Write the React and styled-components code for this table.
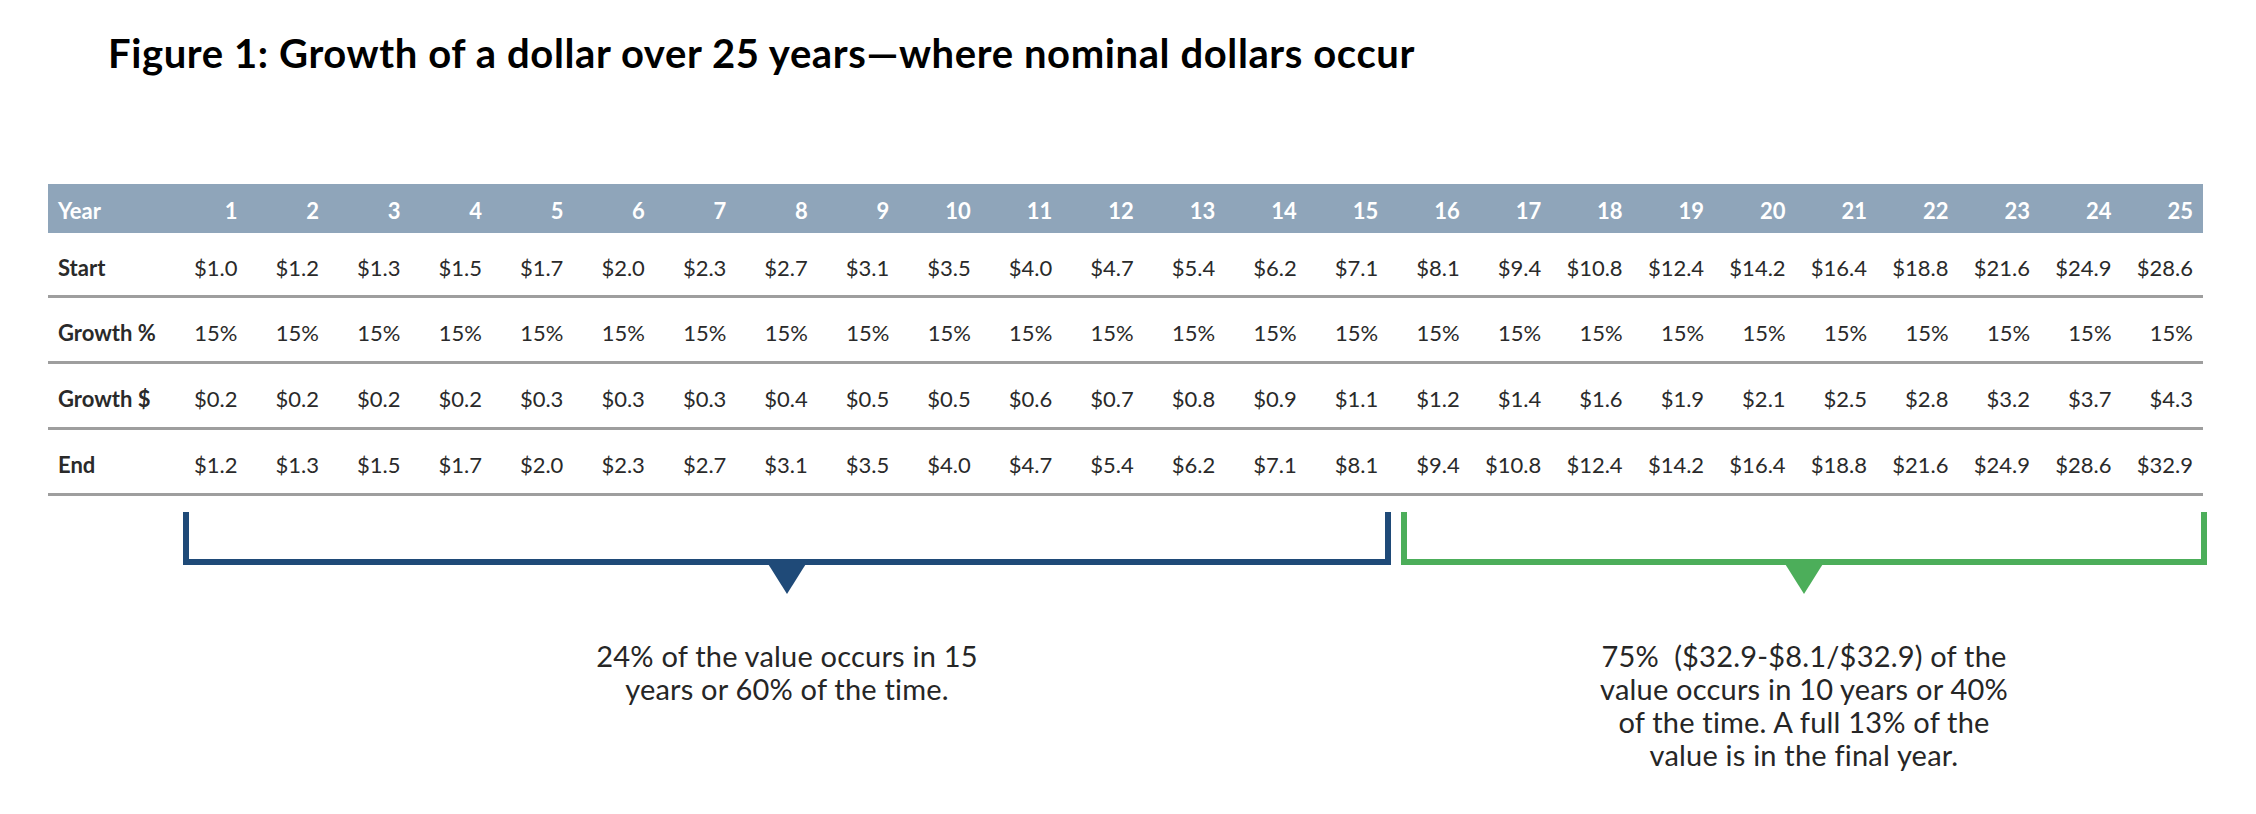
import React from "react";
import styled, { createGlobalStyle } from "styled-components";

const years = Array.from({ length: 25 }, (_, i) => i + 1);

const rows = [
  {
    label: "Start",
    values: [1.0, 1.2, 1.3, 1.5, 1.7, 2.0, 2.3, 2.7, 3.1, 3.5, 4.0, 4.7, 5.4, 6.2, 7.1, 8.1, 9.4, 10.8, 12.4, 14.2, 16.4, 18.8, 21.6, 24.9, 28.6],
  },
  { label: "Growth %", values: years.map(() => "15%") },
  {
    label: "Growth $",
    values: [0.2, 0.2, 0.2, 0.2, 0.3, 0.3, 0.3, 0.4, 0.5, 0.5, 0.6, 0.7, 0.8, 0.9, 1.1, 1.2, 1.4, 1.6, 1.9, 2.1, 2.5, 2.8, 3.2, 3.7, 4.3],
  },
  {
    label: "End",
    values: [1.2, 1.3, 1.5, 1.7, 2.0, 2.3, 2.7, 3.1, 3.5, 4.0, 4.7, 5.4, 6.2, 7.1, 8.1, 9.4, 10.8, 12.4, 14.2, 16.4, 18.8, 21.6, 24.9, 28.6, 32.9],
  },
];

const formatValue = (v) => (typeof v === "number" ? `$${v.toFixed(1)}` : v);

const App = () => {
  return (
    <>
      <GlobalStyle />
      <Page>
        <Title>Figure 1: Growth of a dollar over 25 years—where nominal dollars occur</Title>

        <Table>
          <Row $header>
            <LabelCell>Year</LabelCell>
            {years.map((y) => (
              <Cell key={y}>{y}</Cell>
            ))}
          </Row>
          {rows.map((row, i) => (
            <Row key={row.label} $first={i === 0}>
              <LabelCell>{row.label}</LabelCell>
              {row.values.map((v, j) => (
                <Cell key={j}>{formatValue(v)}</Cell>
              ))}
            </Row>
          ))}
        </Table>

        <Brackets>
          <Group $width={1208}>
            <Bracket $color="#1f4a78" />
            <Caption>
              24% of the value occurs in 15
              <br />
              years or 60% of the time.
            </Caption>
          </Group>
          <Group $width={806}>
            <Bracket $color="#4cae5a" />
            <Caption>
              75%{"\u00a0"} ($32.9-$8.1/$32.9) of the
              <br />
              value occurs in 10 years or 40%
              <br />
              of the time. A full 13% of the
              <br />
              value is in the final year.
            </Caption>
          </Group>
        </Brackets>
      </Page>
    </>
  );
};

export default App;

const GlobalStyle = createGlobalStyle`
  html, body {
    margin: 0;
    padding: 0;
    background: #ffffff;
  }
  body {
    font-family: Lato, "Open Sans", sans-serif;
    color: #222;
  }
`;

const Page = styled.div`
  width: 2256px;
  height: 814px;
  overflow: hidden;
  background: #ffffff;
`;

const Title = styled.h1`
  margin: 0;
  padding: 29px 0 0 108px;
  height: 48px;
  font-size: 40px;
  line-height: 48px;
  font-weight: 700;
  color: #000;
  letter-spacing: 0.6px;
  white-space: nowrap;
`;

const Table = styled.div`
  margin: 107px 0 0 48px;
  width: 2155px;
`;

const Row = styled.div`
  display: grid;
  grid-template-columns: 118px repeat(25, 1fr);
  align-items: center;
  height: ${(p) => (p.$header ? "49px" : p.$first ? "65px" : "66px")};
  box-sizing: border-box;
  padding-top: ${(p) => (p.$header ? "4px" : "6px")};
  background: ${(p) => (p.$header ? "#8fa5ba" : "transparent")};
  color: ${(p) => (p.$header ? "#ffffff" : "#2a2a2a")};
  font-weight: ${(p) => (p.$header ? 700 : 400)};
  border-bottom: ${(p) => (p.$header ? "none" : "3px solid #9e9e9e")};
  font-size: 22px;
`;

const LabelCell = styled.div`
  padding-left: 10px;
  font-weight: 700;
  white-space: nowrap;
`;

const Cell = styled.div`
  text-align: right;
  padding-right: 10px;
  white-space: nowrap;
`;

const Brackets = styled.div`
  display: flex;
  gap: 10px;
  margin: 16px 0 0 183px;
`;

const Group = styled.div`
  display: flex;
  flex-direction: column;
  width: ${(p) => p.$width}px;
`;

const Bracket = styled.div`
  position: relative;
  height: 53px;
  box-sizing: border-box;
  border: 6px solid ${(p) => p.$color};
  border-top: none;

  &::after {
    content: "";
    position: absolute;
    top: 100%;
    left: 50%;
    transform: translateX(-50%);
    border-top: 35px solid ${(p) => p.$color};
    border-left: 22px solid transparent;
    border-right: 22px solid transparent;
  }
`;

const Caption = styled.p`
  margin: 74px 0 0;
  text-align: center;
  font-size: 29px;
  line-height: 33px;
  letter-spacing: 0.2px;
  color: #262626;
  white-space: nowrap;
`;
